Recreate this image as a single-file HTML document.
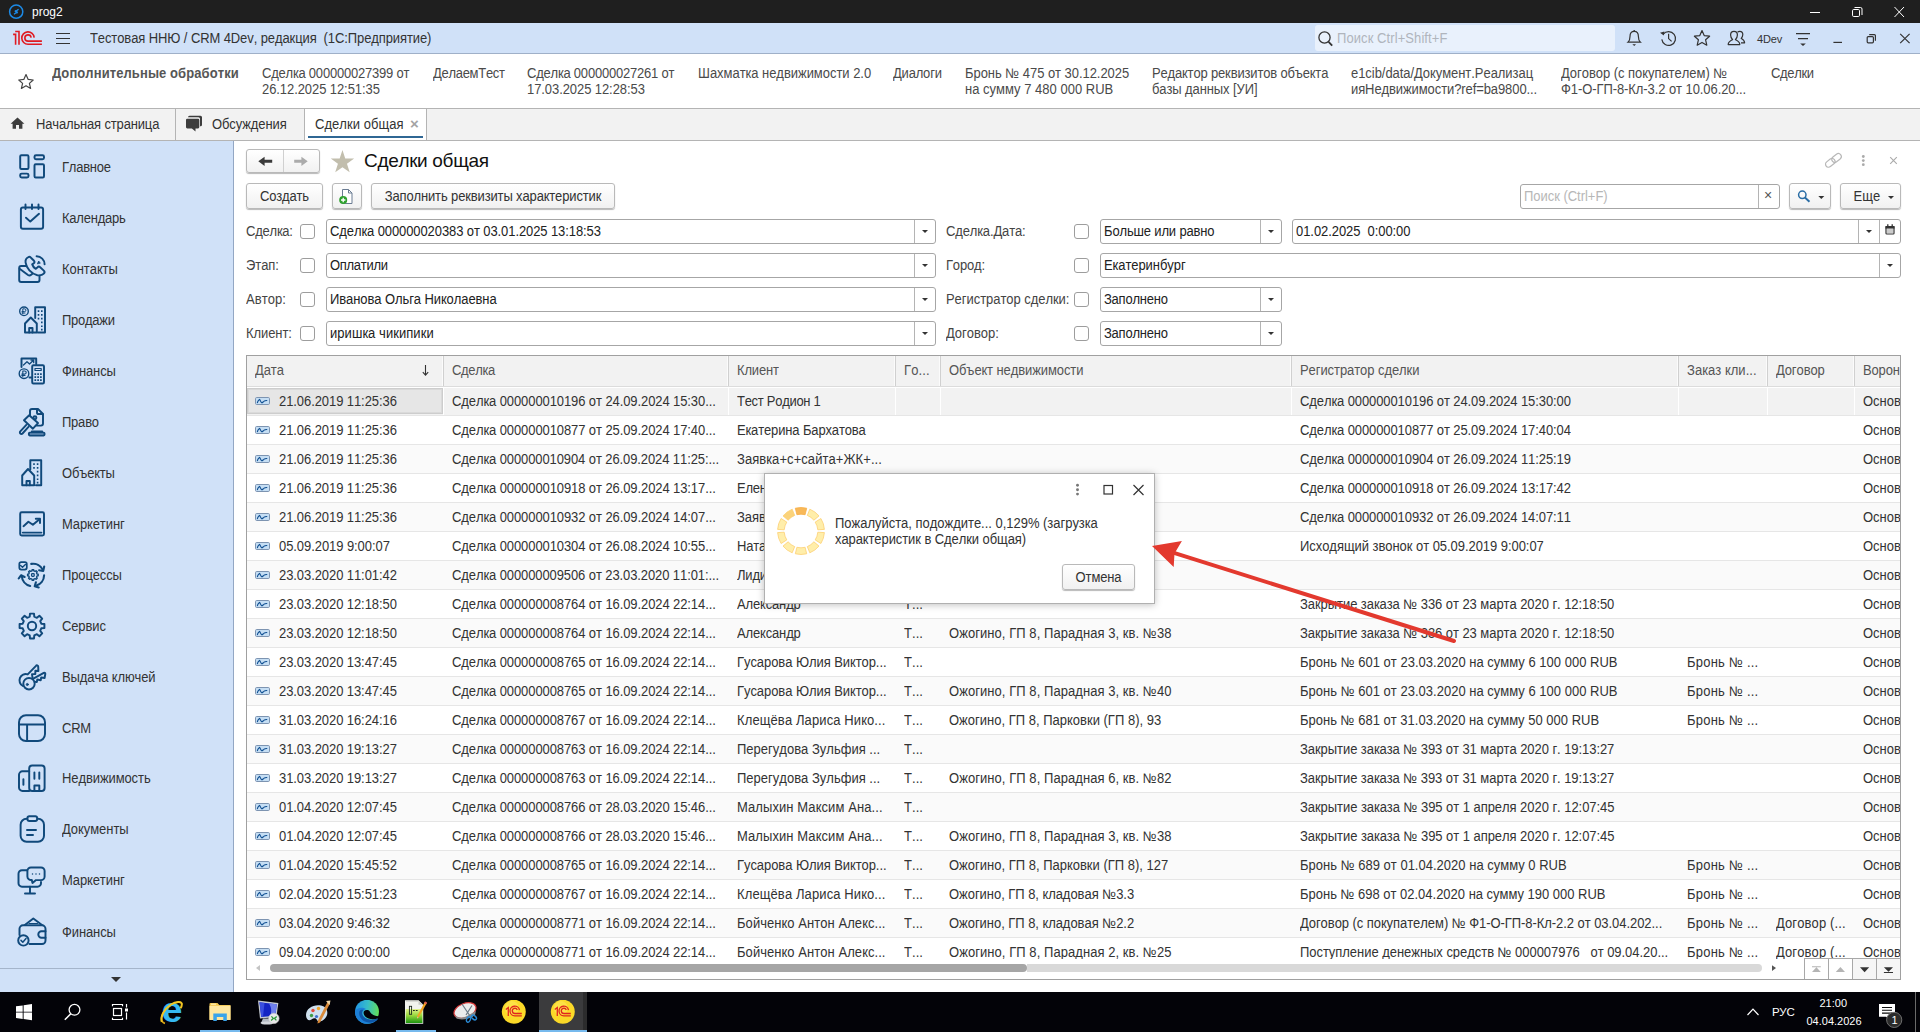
<!DOCTYPE html>
<html lang="ru"><head><meta charset="utf-8"><title>prog2</title>
<style>
*{box-sizing:border-box;margin:0;padding:0}
html,body{width:1920px;height:1032px;overflow:hidden;background:#fff}
body{font-family:"Liberation Sans",sans-serif;font-kerning:none;font-size:13px;color:#333;position:relative;line-height:16px}
.abs{position:absolute}
.s{display:inline-block;transform:scaleY(1.075);transform-origin:0 13px}
.t{position:absolute;white-space:nowrap}
#titlebar{left:0;top:0;width:1920px;height:23px;background:#1f1f1f}
#hdr{left:0;top:23px;width:1920px;height:31px;background:#d0e1f8;border-bottom:1px solid #9fb0c8}
#fav{left:0;top:54px;width:1920px;height:54px;background:#fff}
#tabs{left:0;top:108px;width:1920px;height:33px;background:#f2f2f2;border-top:1px solid #b4b4b4;border-bottom:1px solid #b4b4b4}
#side{left:0;top:141px;width:234px;height:851px;background:#d0e1f8;border-right:1px solid #93a7c4}
#taskbar{left:0;top:992px;width:1920px;height:40px;background:#030308}
.btn{position:absolute;border:1px solid #b9b9b9;border-radius:3px;background:linear-gradient(#fff,#f1f1f1);box-shadow:0 1px 1px rgba(0,0,0,.28);text-align:center;white-space:nowrap;color:#333}
.inp{position:absolute;height:25px;border:1px solid #a6a6a6;border-radius:3px;background:#fff;padding:4px 0 0 3px;white-space:nowrap;color:#222}
.inp i{position:absolute;top:0;bottom:0;width:1px;background:#b4b4b4}
.dd{position:absolute;width:0;height:0;border-left:3px solid transparent;border-right:3px solid transparent;border-top:3px solid #333;top:9.500px}
.cb{position:absolute;width:15px;height:15px;border:1px solid #9d9d9d;border-radius:3px;background:#fff}
.lbl{position:absolute;white-space:nowrap;color:#444}
.favt{position:absolute;top:66px;white-space:nowrap;color:#4a4a4a;font-size:13px;line-height:16px}
.sd{position:absolute;left:62px;white-space:nowrap;color:#333}
.hc{position:absolute;top:356px;height:30px;background:#f2f2f2;border-right:1px solid #d0d0d0;box-shadow:inset -1px 0 0 #fbfbfb;padding:7px 0 0 8px;color:#555;white-space:nowrap;overflow:hidden}
.row{position:absolute;left:247px;width:1653px;height:29px;border-bottom:1px solid #e6e6e6;overflow:hidden}
.c{position:absolute;top:7px;white-space:nowrap;color:#333}
</style></head><body>

<div class="abs" id="titlebar"></div>
<svg class="abs" style="left:8px;top:3px" width="18" height="18" viewBox="0 0 18 18" ><circle cx="8.2" cy="8.7" r="6.6" fill="none" stroke="#1c8ae6" stroke-width="1.5"/><path d="M6 11.2 L9 9 L6.8 7.6 M10.6 6.2 L7.6 8.4 L9.8 9.8" fill="none" stroke="#1c8ae6" stroke-width="1.4"/></svg>
<div class="t" style="left:32px;top:4px;color:#fff;font-size:12px;line-height:16px">prog2</div>
<svg class="abs" style="left:1800px;top:0px" width="120" height="23" viewBox="0 0 120 23" ><path d="M10 12.5 H20" stroke="#fff" stroke-width="1"/><path d="M54.5 7.5 h6 a1.5 1.5 0 0 1 1.5 1.5 v6" fill="none" stroke="#fff" stroke-width="1"/><rect x="52.5" y="9.5" width="7" height="7" rx="1.2" fill="none" stroke="#fff" stroke-width="1"/><path d="M94.5 7 L104 17 M104 7 L94.5 17" stroke="#fff" stroke-width="1"/></svg>
<div class="abs" id="hdr"></div>
<svg class="abs" style="left:12px;top:30px" width="32" height="17" viewBox="0 0 32 17" ><g fill="none" stroke="#e01b22" stroke-width="1.600"><path d="M1.100 4.400 H3.600 V14.800"/><path d="M3.200 1.500 H7 V14.800"/><path d="M22.180 7.560 A6.200 6.200 0 1 0 16 14.300 H29.900"/><path d="M19.120 7.560 A3.150 3.150 0 1 0 16 11.150 H29.900"/></g></svg>
<svg class="abs" style="left:54px;top:31px" width="18" height="15" viewBox="0 0 18 15" ><path d="M2 2.5 H16 M2 7.5 H16 M2 12.5 H16" stroke="#333" stroke-width="1.2"/></svg>
<div class="t" style="left:90px;top:31px;color:#333"><span class="s" style="letter-spacing:-0.100px;">Тестовая ННЮ / CRM 4Dev, редакция&nbsp; (1С:Предприятие)</span></div>
<div class="abs" style="left:1315px;top:25px;width:300px;height:26px;background:#e9f1fc;border-radius:3px"></div>
<div class="t" style="left:1337px;top:31px;color:#b0b5bd"><span class="s" style="letter-spacing:0.081px;">Поиск Ctrl+Shift+F</span></div>
<svg class="abs" style="left:1315px;top:24px" width="605" height="30" viewBox="0 0 605 30" ><g fill="none" stroke="#333" stroke-width="1.3"><circle cx="9.5" cy="13.5" r="5.6"/><path d="M13.6 17.8 L17.2 21.6" stroke-width="1.8"/><path d="M313 18.2 H325.4 C323.6 16.6 323.4 15 323.4 12.4 C323.4 9 321.8 7.4 319.2 7.4 C316.6 7.4 315 9 315 12.4 C315 15 314.8 16.6 313 18.2 Z" stroke-width="1.2"/><path d="M319.2 7.4 V6"/><path d="M317.400 20.300 H321 L319.200 21.900 Z" fill="#333" stroke="none"/><path d="M348.2 10.2 A6.9 6.9 0 1 1 346.8 15.4" stroke-width="1.2"/><path d="M345 8.800 L348.800 11.400 L349.400 7.400 Z" fill="#333" stroke="none"/><path d="M353.6 9.8 V14.6 L356.6 17.4" stroke-width="1.2"/><path d="M387 6.6 L389.2 11.6 L394.6 12.2 L390.6 15.8 L391.8 21.2 L387 18.4 L382.2 21.2 L383.4 15.8 L379.4 12.2 L384.8 11.6 Z" stroke-width="1.2" stroke-linejoin="round"/><path d="M413.2 20.6 C413.2 17.6 415.6 16.6 417.6 15.6 C416 14 415.6 12.4 415.6 11 C415.6 8.8 417.2 7.4 419 7.4 C420.8 7.4 422.4 8.8 422.4 11 C422.4 12.4 422 14 420.4 15.6 C422.4 16.6 424.8 17.6 424.8 20.6 Z" stroke-width="1.2" stroke-linejoin="round"/><path d="M422.6 8.2 C423.2 7.6 424 7.4 424.8 7.4 C426.4 7.400 427.800 8.600 427.800 10.600 C427.800 12 427.4 13.200 426.200 14.400 C428 15.400 429.600 16.200 429.600 18.800 H426" stroke-width="1.2" stroke-linejoin="round"/><path d="M481 9.7 H495 M483 14.700 H493" stroke-width="1.2"/></g><path d="M485.200 19.400 H490.800 L488 22 Z" fill="#333"/><g fill="none" stroke="#333" stroke-width="1.2"><path d="M518.400 18.400 H527"/><path d="M554.200 10.600 h5.200 a1 1 0 0 1 1 1 v5.200"/><rect x="552.2" y="12.600" width="6.200" height="6.200" rx="1"/><path d="M585.200 9.800 L594.600 19.200 M594.600 9.800 L585.200 19.200"/></g></svg>
<div class="t" style="left:1757px;top:31px;color:#333;font-size:11px;letter-spacing:-0.150px">4Dev</div>
<div class="abs" id="fav"></div>
<svg class="abs" style="left:16px;top:72px" width="20" height="18" viewBox="0 0 20 18" ><path d="M10 2.6 L12.2 7.4 L17.2 8 L13.4 11.400 L14.600 16.400 L10 13.800 L5.400 16.400 L6.600 11.400 L2.800 8 L7.800 7.400 Z" fill="none" stroke="#444" stroke-width="1.2" stroke-linejoin="round"/></svg>
<div class="favt" style="left:52px;top:66px;font-weight:bold;color:#565656"><span class="s" style="letter-spacing:0.090px">Дополнительные обработки</span></div>
<div class="favt" style="left:262px"><span class="s" style="letter-spacing:-0.210px;">Сделка 000000027399 от</span><br><span class="s" style="letter-spacing:-0.078px;">26.12.2025 12:51:35</span></div>
<div class="favt" style="left:433px"><span class="s" style="letter-spacing:-0.294px;">ДелаемТест</span></div>
<div class="favt" style="left:527px"><span class="s" style="letter-spacing:-0.210px;">Сделка 000000027261 от</span><br><span class="s" style="letter-spacing:-0.078px;">17.03.2025 12:28:53</span></div>
<div class="favt" style="left:698px"><span class="s" style="letter-spacing:-0.034px;">Шахматка недвижимости 2.0</span></div>
<div class="favt" style="left:893px"><span class="s" style="letter-spacing:-0.194px;">Диалоги</span></div>
<div class="favt" style="left:965px"><span class="s" style="letter-spacing:-0.044px;">Бронь № 475 от 30.12.2025</span><br><span class="s" style="letter-spacing:0.016px;">на сумму 7 480 000 RUB</span></div>
<div class="favt" style="left:1152px"><span class="s" style="letter-spacing:-0.162px;">Редактор реквизитов объекта</span><br><span class="s" style="letter-spacing:-0.099px;">базы данных [УИ]</span></div>
<div class="favt" style="left:1351px"><span class="s" style="letter-spacing:-0.045px;">e1cib/data/Документ.Реализац</span><br><span class="s" style="letter-spacing:-0.095px;">ияНедвижимости?ref=ba9800...</span></div>
<div class="favt" style="left:1561px"><span class="s" style="letter-spacing:-0.032px;">Договор (с покупателем) №</span><br><span class="s" style="letter-spacing:-0.080px;">Ф1-О-ГП-8-Кл-3.2 от 10.06.20...</span></div>
<div class="favt" style="left:1771px"><span class="s" style="letter-spacing:-0.326px;">Сделки</span></div>
<div class="abs" id="tabs"></div>
<div class="abs" style="left:175px;top:109px;width:1px;height:31px;background:#b4b4b4"></div>
<div class="abs" style="left:304px;top:109px;width:123px;height:31px;background:#fff;border-left:1px solid #b4b4b4;border-right:1px solid #b4b4b4"></div>
<div class="abs" style="left:308px;top:136px;width:115px;height:2px;background:#2f6794"></div>
<svg class="abs" style="left:8px;top:112px" width="200" height="24" viewBox="0 0 200 24" ><path d="M9.500 5.600 L2.600 11.800 H4.600 V16.800 H8 V13 H11 V16.800 H14.400 V11.800 H16.400 Z" fill="#3d3d3d"/><path d="M181.500 3.800 h11 a1.500 1.500 0 0 1 1.500 1.500 v7.500 a1.500 1.500 0 0 1 -1.500 1.500 h-0.500 v-7.500 a1.500 1.500 0 0 0 -1.500 -1.500 h-10.500 v0 a1.500 1.500 0 0 1 1.500 -1.500z" fill="#3d3d3d"/><path d="M179.300 6.800 h10.700 a1.300 1.300 0 0 1 1.300 1.300 v7 a1.300 1.300 0 0 1 -1.300 1.300 h-2.500 l0 3.200 l-3.600 -3.200 h-4.600 a1.300 1.300 0 0 1 -1.300 -1.300 v-7 a1.300 1.300 0 0 1 1.300 -1.300z" fill="#3d3d3d"/></svg>
<div class="t" style="left:36px;top:117px;color:#333"><span class="s" style="letter-spacing:-0.159px;">Начальная страница</span></div>
<div class="t" style="left:212px;top:117px;color:#333"><span class="s" style="letter-spacing:-0.092px;">Обсуждения</span></div>
<div class="t" style="left:315px;top:117px;color:#333"><span class="s" style="letter-spacing:0.042px;">Сделки общая</span></div>
<div class="t" style="left:410px;top:116px;color:#a4a4a4;font-size:15px;font-weight:bold">×</div>
<div class="abs" id="side"></div>
<svg class="abs" style="left:16px;top:151px" width="32" height="32" viewBox="0 0 32 32"><g fill="none" stroke="#10497b" stroke-width="1.950" stroke-linejoin="round" stroke-linecap="round"><rect x="4.200" y="4.200" width="8.300" height="13.700" rx="1.200"/><rect x="18.500" y="4.200" width="9.500" height="4" rx="1.500"/><rect x="4.200" y="22.600" width="8.300" height="3.800" rx="1.500"/><rect x="18.500" y="13.300" width="9.500" height="13.100" rx="1.200"/></g></svg>
<div class="sd" style="top:160px"><span class="s" style="letter-spacing:-0.235px;">Главное</span></div>
<svg class="abs" style="left:16px;top:202px" width="32" height="32" viewBox="0 0 32 32"><g fill="none" stroke="#10497b" stroke-width="1.950" stroke-linejoin="round" stroke-linecap="round"><rect x="4.900" y="5.500" width="22.200" height="21.300" rx="2"/><path d="M9.500 2.500 V7 M16 2.500 V7 M22.500 2.500 V7"/><path d="M10 15.700 L14.300 19.600 L23 11.800"/></g></svg>
<div class="sd" style="top:211px"><span class="s" style="letter-spacing:-0.215px;">Календарь</span></div>
<svg class="abs" style="left:16px;top:253px" width="32" height="32" viewBox="0 0 32 32"><g fill="none" stroke="#10497b" stroke-width="1.950" stroke-linejoin="round" stroke-linecap="round"><path d="M10.400 12.900 H5.200 a2 2 0 0 0 -2 2 V27 a2 2 0 0 0 2 2 H21.500 a2 2 0 0 0 2 -2 V22.600"/><path d="M3.600 15.800 L12 22 C13.200 22.800 14.200 22.600 15.200 21.800 L16.400 20.800"/><path d="M12.900 3.800 C14 3.400 14.600 4.400 15.200 5 L18 7.800 C18.800 8.800 18.600 9.600 17.800 10.200 L16.200 11.400 C16.800 13.400 18 14.800 19.800 15.800 L21.600 14.200 C22.400 13.400 23.400 13.400 24.200 14.200 L27.800 17.600 C28.800 18.600 28.600 19.800 27.800 20.600 C26 22.400 23.600 22.600 21.400 22.200 C15 20.800 10.400 15 9.600 9.600 C9.200 7.200 10.400 4.800 12.900 3.800 Z"/><path d="M20.600 3.200 A8.100 8.100 0 0 1 28.600 11.200"/><path d="M21.500 10.500 L22.700 8 L24.100 9.900 Z" fill="#10497b" stroke-width="0.800"/></g></svg>
<div class="sd" style="top:262px"><span class="s" style="letter-spacing:-0.054px;">Контакты</span></div>
<svg class="abs" style="left:16px;top:304px" width="32" height="32" viewBox="0 0 32 32"><g fill="none" stroke="#10497b" stroke-width="1.950" stroke-linejoin="round" stroke-linecap="round"><path d="M19.200 14 V3.200 H29 V28.400 H22"/><circle cx="8" cy="7.300" r="4.300" stroke-width="1.400"/><path d="M6.800 10 V4.800 H8.500 A1.400 1.400 0 0 1 8.500 7.600 H6 M6 9 H9" stroke-width="1"/><path d="M9 28.400 V19.500 L14.800 13.500 L20.800 19.500 V28.400 Z"/><path d="M13.200 28.400 V24 H16.500 V28.400"/><path d="M22.500 7 V7.100 M25.800 7 V7.100 M22.500 10.800 V10.900 M25.800 10.800 V10.900 M22.500 14.600 V14.700 M25.800 14.600 V14.700 M25.800 18.400 V18.500 M25.800 22.200 V22.300 M25.800 25.600 V25.700" stroke-width="1.600" stroke-linecap="square"/></g></svg>
<div class="sd" style="top:313px"><span class="s" style="letter-spacing:-0.263px;">Продажи</span></div>
<svg class="abs" style="left:16px;top:355px" width="32" height="32" viewBox="0 0 32 32"><g fill="none" stroke="#10497b" stroke-width="1.950" stroke-linejoin="round" stroke-linecap="round"><path d="M15.500 22.500 H13.500 M5.500 12 V3.500 H20.200 V9"/><path d="M7.500 10 L11 6.800 L13.500 9 L17.500 5.200 M15 5 H17.700 V7.700" stroke-width="1.300"/><circle cx="8" cy="18.700" r="4.800" stroke-width="1.400"/><path d="M6.800 21.600 V16 H8.700 A1.500 1.500 0 0 1 8.700 19 H5.800 M5.800 20.400 H9" stroke-width="1.100"/><rect x="16.200" y="10.300" width="11.800" height="18.200" rx="1.200"/><path d="M19 13.500 H25.200 V15.500 H19 Z" stroke-width="1.200"/><path d="M19.300 19 V19.100 M22.100 19 V19.100 M24.900 19 V19.100 M19.300 22 V22.100 M22.100 22 V22.100 M24.900 22 V22.100 M19.300 25 V25.100 M22.100 25 V25.100 M24.900 25 V25.100" stroke-width="1.700" stroke-linecap="square"/></g></svg>
<div class="sd" style="top:364px"><span class="s" style="letter-spacing:-0.121px;">Финансы</span></div>
<svg class="abs" style="left:16px;top:406px" width="32" height="32" viewBox="0 0 32 32"><g fill="none" stroke="#10497b" stroke-width="1.950" stroke-linejoin="round" stroke-linecap="round"><path d="M14 9.600 V5 a2 2 0 0 1 2 -2 H22 L27 8 V17.600 a2 2 0 0 1 -2 2 H20.800"/><path d="M21 3.400 V6.400 a1.600 1.600 0 0 0 1.600 1.600 H26.600"/><circle cx="18.900" cy="11.700" r="1.500"/><path d="M13.200 9.200 L22 17.100 L16.900 22.700 L8 14.200 Z" fill="#d0e1f8"/><path d="M10.300 18.900 L4.300 25.400 a1.500 1.500 0 0 0 2.200 2.100 L12.500 20.900"/><path d="M15.800 25.500 H26.200"/><rect x="12.900" y="26.600" width="15.600" height="2.800" rx="0.800" fill="#8fb0d6"/></g></svg>
<div class="sd" style="top:415px"><span class="s" style="letter-spacing:-0.225px;">Право</span></div>
<svg class="abs" style="left:16px;top:457px" width="32" height="32" viewBox="0 0 32 32"><g fill="none" stroke="#10497b" stroke-width="1.950" stroke-linejoin="round" stroke-linecap="round"><path d="M14.300 12.500 V3.200 H25.200 V28.200 H20"/><path d="M6.200 28.200 V18.500 L12 12 L18.200 18.500 V28.200 Z"/><path d="M10.500 28.200 V24 H13.800 V28.200"/><path d="M18 7 V7.100 M21.600 7 V7.100 M18 10.800 V10.900 M21.600 10.800 V10.900 M21.600 14.600 V14.700 M21.600 18.400 V18.500 M21.600 22.200 V22.300 M21.600 25.600 V25.700" stroke-width="1.600" stroke-linecap="square"/></g></svg>
<div class="sd" style="top:466px"><span class="s" style="letter-spacing:-0.166px;">Объекты</span></div>
<svg class="abs" style="left:16px;top:508px" width="32" height="32" viewBox="0 0 32 32"><g fill="none" stroke="#10497b" stroke-width="1.950" stroke-linejoin="round" stroke-linecap="round"><rect x="4.200" y="4.200" width="23.800" height="23.400" rx="1.500"/><path d="M6.800 24.600 H25.400"/><path d="M7.500 18.200 L12.400 13.700 L16.900 16.800 L23.500 11.200"/><path d="M19.800 10.800 H24 V15"/></g></svg>
<div class="sd" style="top:517px"><span class="s" style="letter-spacing:-0.073px;">Маркетинг</span></div>
<svg class="abs" style="left:16px;top:559px" width="32" height="32" viewBox="0 0 32 32"><g fill="none" stroke="#10497b" stroke-width="1.950" stroke-linejoin="round" stroke-linecap="round"><rect x="3.300" y="3.100" width="7.500" height="7.500" rx="2" stroke-width="1.700"/><path d="M4.600 6.500 L6.500 8.300 L9.400 5.500" stroke-width="1.400"/><path d="M16.0 11.9 L16.1 10.7 L17.7 10.7 L17.8 11.9 L19.1 12.4 L20.1 11.7 L21.2 12.8 L20.5 13.8 L21.0 15.1 L22.2 15.2 L22.2 16.8 L21.0 16.9 L20.5 18.2 L21.2 19.2 L20.1 20.3 L19.1 19.6 L17.8 20.1 L17.7 21.3 L16.1 21.3 L16.0 20.1 L14.7 19.6 L13.7 20.3 L12.6 19.2 L13.3 18.2 L12.8 16.9 L11.6 16.8 L11.6 15.2 L12.8 15.1 L13.3 13.8 L12.6 12.8 L13.7 11.7 L14.7 12.4 Z" stroke-width="1.400"/><rect x="15.600" y="14.700" width="2.600" height="2.600" rx="0.700" stroke-width="1.300"/><path d="M15.2 4.9 A11.2 11.2 0 0 1 26.9 10.9" stroke-width="2.100"/><path d="M28.200 7.600 L27.200 12 L23.100 11.300" stroke-width="2.100"/><path d="M28.1 16.3 A11.2 11.2 0 0 1 20.0 26.8" stroke-width="2.100"/><path d="M19.900 23.300 L18.700 27.300 L22.700 28.500" stroke-width="2.100"/><path d="M14.2 26.9 A11.2 11.2 0 0 1 5.7 16.8" stroke-width="2.100"/><path d="M2.700 19.500 L5 16.300 L8.600 18" stroke-width="2.100"/></g></svg>
<div class="sd" style="top:568px"><span class="s" style="letter-spacing:-0.140px;">Процессы</span></div>
<svg class="abs" style="left:16px;top:610px" width="32" height="32" viewBox="0 0 32 32"><g fill="none" stroke="#10497b" stroke-width="1.950" stroke-linejoin="round" stroke-linecap="round"><path d="M13.7 6.7 L14.0 3.6 L18.0 3.6 L18.3 6.7 L20.9 7.8 L23.4 5.8 L26.2 8.6 L24.2 11.1 L25.3 13.7 L28.4 14.0 L28.4 18.0 L25.3 18.3 L24.2 20.9 L26.2 23.4 L23.4 26.2 L20.9 24.2 L18.3 25.3 L18.0 28.4 L14.0 28.4 L13.7 25.3 L11.1 24.2 L8.6 26.2 L5.8 23.4 L7.8 20.9 L6.7 18.3 L3.6 18.0 L3.6 14.0 L6.7 13.7 L7.8 11.1 L5.8 8.6 L8.6 5.8 L11.1 7.8 Z"/><circle cx="16" cy="16" r="4.200"/></g></svg>
<div class="sd" style="top:619px"><span class="s" style="letter-spacing:-0.123px;">Сервис</span></div>
<svg class="abs" style="left:16px;top:661px" width="32" height="32" viewBox="0 0 32 32"><g fill="none" stroke="#10497b" stroke-width="1.950" stroke-linejoin="round" stroke-linecap="round"><path d="M6.900 25 A6.300 6.300 0 0 1 11.700 13.400 L20 4.900 a1.200 1.200 0 0 1 2.200 0.600 L22.400 10 L19.400 9.700 L19.300 13 L16 13.100 L16.500 16.600"/><circle cx="13" cy="22.700" r="5.700" fill="#d0e1f8"/><circle cx="11.300" cy="23.500" r="1.100" fill="#10497b" stroke-width="0.800"/><path d="M16.900 17.900 L27.800 11.900 a1 1 0 0 1 1.500 0.900 L28.600 17 L25.200 16.500 L24.700 19.200 L21.300 18.500 L20.800 21.100 L18.700 20.800"/></g></svg>
<div class="sd" style="top:670px"><span class="s" style="letter-spacing:-0.092px;">Выдача ключей</span></div>
<svg class="abs" style="left:16px;top:712px" width="32" height="32" viewBox="0 0 32 32"><g fill="none" stroke="#10497b" stroke-width="1.950" stroke-linejoin="round" stroke-linecap="round"><rect x="3" y="3.200" width="26" height="25.800" rx="7"/><path d="M3 12.400 H29 M11.100 12.400 V29"/></g></svg>
<div class="sd" style="top:721px"><span class="s" style="letter-spacing:-0.250px;">CRM</span></div>
<svg class="abs" style="left:16px;top:762px" width="32" height="32" viewBox="0 0 32 32"><g fill="none" stroke="#10497b" stroke-width="1.950" stroke-linejoin="round" stroke-linecap="round"><rect x="13.200" y="3.500" width="15.400" height="25.400" rx="3"/><path d="M13.200 9.300 H6.500 a3.500 3.500 0 0 0 -3.500 3.500 V25.400 a3.500 3.500 0 0 0 3.500 3.500 H13.200"/><path d="M18.400 10.500 V16.800 M23.300 10.500 V16.800 M7.400 17.300 V22.700"/><path d="M18.400 28.900 V23.500 H23.300 V28.900"/></g></svg>
<div class="sd" style="top:771px"><span class="s" style="letter-spacing:-0.097px;">Недвижимость</span></div>
<svg class="abs" style="left:16px;top:813px" width="32" height="32" viewBox="0 0 32 32"><g fill="none" stroke="#10497b" stroke-width="1.950" stroke-linejoin="round" stroke-linecap="round"><rect x="4.600" y="5.800" width="23.400" height="23" rx="6"/><rect x="11.500" y="3.200" width="9.600" height="4.800" rx="1.800" fill="#d3e3f9"/><path d="M11 16.900 H20 M11 21.900 H17"/></g></svg>
<div class="sd" style="top:822px"><span class="s" style="letter-spacing:-0.022px;">Документы</span></div>
<svg class="abs" style="left:16px;top:864px" width="32" height="32" viewBox="0 0 32 32"><g fill="none" stroke="#10497b" stroke-width="1.950" stroke-linejoin="round" stroke-linecap="round"><path d="M11 6.200 H6 a3.500 3.500 0 0 0 -3.500 3.500 V19.200 a3.500 3.500 0 0 0 3.500 3.500 H21.500 a3.500 3.500 0 0 0 3.500 -3.500 V18"/><path d="M14 22.700 V29 M9 29.400 H19"/><path d="M15 3.500 H25 a3.600 3.600 0 0 1 3.600 3.600 V12.500 a3.600 3.600 0 0 1 -3.600 3.600 H20 L16.500 19 L15.800 16 a3.600 3.600 0 0 1 -4.400 -3.500 V7.100 a3.600 3.600 0 0 1 3.600 -3.600z"/><path d="M16.500 10 V10.100 M20 10 V10.100 M23.500 10 V10.100" stroke-width="1.500"/></g></svg>
<div class="sd" style="top:873px"><span class="s" style="letter-spacing:-0.073px;">Маркетинг</span></div>
<svg class="abs" style="left:16px;top:916px" width="32" height="32" viewBox="0 0 32 32"><g fill="none" stroke="#10497b" stroke-width="1.950" stroke-linejoin="round" stroke-linecap="round"><path d="M13.500 28 H26 a3.500 3.500 0 0 0 3.500 -3.500 V12.800 a3.500 3.500 0 0 0 -3.500 -3.500 H7 a3.500 3.500 0 0 0 -3.500 3.500 V19"/><path d="M8.800 9 L17.300 2.500 L26 9"/><path d="M13 7.500 H21.500" stroke-width="1.200"/><path d="M29.500 15.300 H25.500 a3.200 3.200 0 0 0 0 6.400 H29.500"/><circle cx="7.400" cy="24.400" r="5.200"/><path d="M5 24.400 L6.800 26.200 L10 22.600" stroke-width="1.500"/></g></svg>
<div class="sd" style="top:925px"><span class="s" style="letter-spacing:-0.121px;">Финансы</span></div>
<div class="abs" style="left:0;top:968px;width:233px;height:1px;background:#a5b5cb"></div>
<div class="abs" style="left:111px;top:977px;width:0;height:0;border-left:5px solid transparent;border-right:5px solid transparent;border-top:5px solid #333"></div>
<div class="btn" style="left:246px;top:149px;width:74px;height:24px"></div>
<div class="abs" style="left:283px;top:150px;width:1px;height:22px;background:#d0d0d0"></div>
<svg class="abs" style="left:247px;top:149px" width="120" height="26" viewBox="0 0 120 26" ><path d="M11.300 12.300 L17.600 7.700 V10.800 H25.200 V13.800 H17.600 V16.900 Z" fill="#3a3a3a"/><path d="M60.700 12.300 L54.400 7.700 V10.800 H47.200 V13.800 H54.400 V16.900 Z" fill="#ababab"/><path d="M95.45 1.10 L98.24 9.56 L107.15 9.60 L99.97 14.87 L102.68 23.35 L95.45 18.15 L88.22 23.35 L90.93 14.87 L83.75 9.60 L92.66 9.56 Z" fill="#c2bead"/></svg>
<div class="t" style="left:364px;top:149px;font-size:19px;line-height:24px;color:#111;letter-spacing:-0.33px">Сделки общая</div>
<svg class="abs" style="left:1820px;top:150px" width="90" height="22" viewBox="0 0 90 22" ><g fill="none" stroke="#b8b8b8" stroke-width="1.200" transform="rotate(-38 13.400 10.400)"><rect x="4.200" y="7.400" width="10.500" height="6" rx="3"/><rect x="12.100" y="7.400" width="10.500" height="6" rx="3"/></g><circle cx="43.300" cy="6.500" r="1.400" fill="#aaa"/><circle cx="43.300" cy="10.600" r="1.400" fill="#aaa"/><circle cx="43.300" cy="14.700" r="1.400" fill="#aaa"/><path d="M70.200 7.200 L76.800 13.800 M76.800 7.200 L70.200 13.800" stroke="#aaa" stroke-width="1.100"/></svg>
<div class="btn" style="left:246px;top:183px;width:77px;height:26px;padding-top:5px"><span class="s" style="letter-spacing:-0.195px;">Создать</span></div>
<div class="btn" style="left:332px;top:183px;width:30px;height:26px"></div>
<svg class="abs" style="left:336.5px;top:188px" width="20" height="18" viewBox="0 0 20 18" ><path d="M5.500 1.500 H11.500 L15 5 V15.500 H5.500 Z" fill="#fff" stroke="#6b7c93" stroke-width="1"/><path d="M11.500 1.500 V5 H15" fill="none" stroke="#6b7c93" stroke-width="1"/><circle cx="6.200" cy="12" r="4" fill="#2fa12f"/><path d="M6.200 9.800 V14.200 M4 12 H8.400" stroke="#fff" stroke-width="1.300"/></svg>
<div class="btn" style="left:371px;top:183px;width:244px;height:26px;padding-top:5px"><span class="s" style="letter-spacing:-0.137px;">Заполнить реквизиты характеристик</span></div>
<div class="inp" style="left:1520px;top:184px;width:260px"><span style="color:#b7b7b7"><span class="s" style="letter-spacing:-0.033px;">Поиск (Ctrl+F)</span></span><i style="left:237px"></i><span style="position:absolute;left:243px;top:2px;color:#555;font-size:14px">×</span></div>
<div class="btn" style="left:1789px;top:183px;width:42px;height:26px"></div>
<svg class="abs" style="left:1789px;top:183px" width="42" height="26" viewBox="0 0 42 26" ><circle cx="13.300" cy="11.800" r="3.700" fill="none" stroke="#2a6da5" stroke-width="1.500"/><path d="M15.900 14.600 L20.500 18.700" stroke="#2a6da5" stroke-width="2"/><path d="M29.300 13 H35.300 L32.300 16 Z" fill="#333"/></svg>
<div class="btn" style="left:1840px;top:183px;width:61px;height:26px;padding:5px 7px 0 0"><span class="s" style="letter-spacing:0.089px;">Еще</span><span class="dd" style="left:47px;top:12px"></span></div>
<div class="lbl" style="left:246px;top:224px"><span class="s" style="letter-spacing:-0.222px;">Сделка:</span></div><div class="cb" style="left:300px;top:224px"></div>
<div class="inp" style="left:326px;top:219px;width:610px"><span class="s" style="letter-spacing:-0.094px;">Сделка 000000020383 от 03.01.2025 13:18:53</span><i style="left:587px"></i><span class="dd" style="left:595px"></span></div>
<div class="lbl" style="left:246px;top:258px"><span class="s" style="letter-spacing:-0.069px;">Этап:</span></div><div class="cb" style="left:300px;top:258px"></div>
<div class="inp" style="left:326px;top:253px;width:610px"><span class="s" style="letter-spacing:-0.291px;">Оплатили</span><i style="left:587px"></i><span class="dd" style="left:595px"></span></div>
<div class="lbl" style="left:246px;top:292px"><span class="s" style="letter-spacing:0.033px;">Автор:</span></div><div class="cb" style="left:300px;top:292px"></div>
<div class="inp" style="left:326px;top:287px;width:610px"><span class="s" style="letter-spacing:-0.084px;">Иванова Ольга Николаевна</span><i style="left:587px"></i><span class="dd" style="left:595px"></span></div>
<div class="lbl" style="left:246px;top:326px"><span class="s" style="letter-spacing:-0.089px;">Клиент:</span></div><div class="cb" style="left:300px;top:326px"></div>
<div class="inp" style="left:326px;top:321px;width:610px"><span class="s" style="letter-spacing:0.050px;">иришка чикипики</span><i style="left:587px"></i><span class="dd" style="left:595px"></span></div>
<div class="lbl" style="left:946px;top:224px"><span class="s" style="letter-spacing:-0.129px;">Сделка.Дата:</span></div><div class="cb" style="left:1074px;top:224px"></div>
<div class="lbl" style="left:946px;top:258px"><span class="s" style="letter-spacing:-0.187px;">Город:</span></div><div class="cb" style="left:1074px;top:258px"></div>
<div class="lbl" style="left:946px;top:292px"><span class="s" style="letter-spacing:-0.049px;">Регистратор сделки:</span></div><div class="cb" style="left:1074px;top:292px"></div>
<div class="lbl" style="left:946px;top:326px"><span class="s" style="letter-spacing:-0.031px;">Договор:</span></div><div class="cb" style="left:1074px;top:326px"></div>
<div class="inp" style="left:1100px;top:219px;width:182px"><span class="s" style="letter-spacing:-0.153px;">Больше или равно</span><i style="left:159px"></i><span class="dd" style="left:167px"></span></div>
<div class="inp" style="left:1292px;top:219px;width:609px"><span class="s" style="letter-spacing:-0.065px;">01.02.2025&nbsp; 0:00:00</span><i style="left:565px"></i><span class="dd" style="left:573px"></span><i style="left:586px"></i></div>
<svg class="abs" style="left:1882px;top:222px" width="16" height="16" viewBox="0 0 16 16" ><rect x="4" y="4.500" width="8" height="7.500" rx="0.800" fill="#fff" stroke="#333" stroke-width="1.200"/><rect x="3.500" y="4" width="9" height="2.600" fill="#333"/><path d="M5.800 2.200 V4.500 M10.200 2.200 V4.500" stroke="#333" stroke-width="1.300"/><path d="M5.500 8 h1 M7.500 8 h1 M9.500 8 h1 M5.500 10 h1 M7.500 10 h1 M9.500 10 h1" stroke="#333" stroke-width="1"/></svg>
<div class="inp" style="left:1100px;top:253px;width:801px"><span class="s" style="letter-spacing:-0.064px;">Екатеринбург</span><i style="left:778px"></i><span class="dd" style="left:786px"></span></div>
<div class="inp" style="left:1100px;top:287px;width:182px"><span class="s" style="letter-spacing:-0.231px;">Заполнено</span><i style="left:159px"></i><span class="dd" style="left:167px"></span></div>
<div class="inp" style="left:1100px;top:321px;width:182px"><span class="s" style="letter-spacing:-0.231px;">Заполнено</span><i style="left:159px"></i><span class="dd" style="left:167px"></span></div>
<div class="abs" style="left:246px;top:355px;width:1655px;height:625px;border:1px solid #a0a0a0;background:#fff"></div>
<div class="hc" style="left:247px;width:197px;padding-left:8px"><span class="s" style="letter-spacing:-0.091px;">Дата</span></div>
<div class="hc" style="left:444px;width:285px;padding-left:8px"><span class="s" style="letter-spacing:-0.320px;">Сделка</span></div>
<div class="hc" style="left:729px;width:167px;padding-left:8px"><span class="s" style="letter-spacing:-0.166px;">Клиент</span></div>
<div class="hc" style="left:896px;width:45px;padding-left:8px"><span class="s" style="letter-spacing:0.153px;">Го...</span></div>
<div class="hc" style="left:941px;width:351px;padding-left:8px"><span class="s" style="letter-spacing:-0.097px;">Объект недвижимости</span></div>
<div class="hc" style="left:1292px;width:387px;padding-left:8px"><span class="s" style="letter-spacing:-0.072px;">Регистратор сделки</span></div>
<div class="hc" style="left:1679px;width:89px;padding-left:8px"><span class="s" style="letter-spacing:0.059px;">Заказ кли...</span></div>
<div class="hc" style="left:1768px;width:87px;padding-left:8px"><span class="s" style="letter-spacing:-0.088px;">Договор</span></div>
<div class="hc" style="left:1855px;width:45px;border-right:none;box-shadow:none;padding-left:8px"><span class="s" style="letter-spacing:-0.145px;">Ворон</span></div>
<div class="abs" style="left:247px;top:386px;width:1653px;height:1px;background:#dcdcdc"></div>
<svg class="abs" style="left:420px;top:363px" width="12" height="14" viewBox="0 0 12 14"><path d="M5.500 2 V12 M2.800 9.200 L5.500 12.200 L8.200 9.200" fill="none" stroke="#333" stroke-width="1.100"/></svg>
<div class="row" style="top:387px;background:#fff">
<div class="abs" style="left:0;top:1px;width:1653px;height:27px;background:#f2f2f2"></div>
<div class="abs" style="left:196px;top:1px;width:1px;height:27px;background:#fff"></div>
<div class="abs" style="left:481px;top:1px;width:1px;height:27px;background:#fff"></div>
<div class="abs" style="left:648px;top:1px;width:1px;height:27px;background:#fff"></div>
<div class="abs" style="left:693px;top:1px;width:1px;height:27px;background:#fff"></div>
<div class="abs" style="left:1044px;top:1px;width:1px;height:27px;background:#fff"></div>
<div class="abs" style="left:1431px;top:1px;width:1px;height:27px;background:#fff"></div>
<div class="abs" style="left:1520px;top:1px;width:1px;height:27px;background:#fff"></div>
<div class="abs" style="left:1607px;top:1px;width:1px;height:27px;background:#fff"></div>
<div class="abs" style="left:0;top:1px;width:196px;height:26px;border:1px solid #cdcdcd;box-shadow:inset 0 0 0 1px #dadada;background:#e6e6e6"></div>
<svg class="abs" style="left:8px;top:9px" width="16" height="10" viewBox="0 0 16 10"><rect x="0.500" y="1.500" width="14" height="7" rx="1.200" fill="#c5def4" stroke="#7d94b1" stroke-width="1"/><path d="M2.400 6.700 C2.600 5.400 3.600 4.200 4.500 3.400 C5.300 4 5.600 6 6.600 6.700 C7.500 7.100 8 5.900 8.700 5.400 C9.500 4.800 10.300 4.500 11.800 4.500" fill="none" stroke="#0f4f92" stroke-width="1.150" stroke-linecap="round"/></svg>
<div class="c" style="left:32px"><span class="s" style="letter-spacing:-0.078px;">21.06.2019 11:25:36</span></div>
<div class="c" style="left:205px"><span class="s" style="letter-spacing:-0.091px;">Сделка 000000010196 от 24.09.2024 15:30...</span></div>
<div class="c" style="left:490px"><span class="s" style="letter-spacing:-0.287px;">Тест Родион 1</span></div>
<div class="c" style="left:1053px"><span class="s" style="letter-spacing:-0.094px;">Сделка 000000010196 от 24.09.2024 15:30:00</span></div>
<div class="c" style="left:1616px"><span class="s" style="letter-spacing:-0.023px;">Основ</span></div>
</div>
<div class="row" style="top:416px;background:#fff">
<svg class="abs" style="left:8px;top:9px" width="16" height="10" viewBox="0 0 16 10"><rect x="0.500" y="1.500" width="14" height="7" rx="1.200" fill="#c5def4" stroke="#7d94b1" stroke-width="1"/><path d="M2.400 6.700 C2.600 5.400 3.600 4.200 4.500 3.400 C5.300 4 5.600 6 6.600 6.700 C7.500 7.100 8 5.900 8.700 5.400 C9.500 4.800 10.300 4.500 11.800 4.500" fill="none" stroke="#0f4f92" stroke-width="1.150" stroke-linecap="round"/></svg>
<div class="c" style="left:32px"><span class="s" style="letter-spacing:-0.078px;">21.06.2019 11:25:36</span></div>
<div class="c" style="left:205px"><span class="s" style="letter-spacing:-0.091px;">Сделка 000000010877 от 25.09.2024 17:40...</span></div>
<div class="c" style="left:490px"><span class="s" style="letter-spacing:-0.138px;">Екатерина Бархатова</span></div>
<div class="c" style="left:1053px"><span class="s" style="letter-spacing:-0.094px;">Сделка 000000010877 от 25.09.2024 17:40:04</span></div>
<div class="c" style="left:1616px"><span class="s" style="letter-spacing:-0.023px;">Основ</span></div>
</div>
<div class="row" style="top:445px;background:#fafafa">
<svg class="abs" style="left:8px;top:9px" width="16" height="10" viewBox="0 0 16 10"><rect x="0.500" y="1.500" width="14" height="7" rx="1.200" fill="#c5def4" stroke="#7d94b1" stroke-width="1"/><path d="M2.400 6.700 C2.600 5.400 3.600 4.200 4.500 3.400 C5.300 4 5.600 6 6.600 6.700 C7.500 7.100 8 5.900 8.700 5.400 C9.500 4.800 10.300 4.500 11.800 4.500" fill="none" stroke="#0f4f92" stroke-width="1.150" stroke-linecap="round"/></svg>
<div class="c" style="left:32px"><span class="s" style="letter-spacing:-0.078px;">21.06.2019 11:25:36</span></div>
<div class="c" style="left:205px"><span class="s" style="letter-spacing:-0.097px;">Сделка 000000010904 от 26.09.2024 11:25:...</span></div>
<div class="c" style="left:490px"><span class="s" style="letter-spacing:0.074px;">Заявка+с+сайта+ЖК+...</span></div>
<div class="c" style="left:1053px"><span class="s" style="letter-spacing:-0.094px;">Сделка 000000010904 от 26.09.2024 11:25:19</span></div>
<div class="c" style="left:1616px"><span class="s" style="letter-spacing:-0.023px;">Основ</span></div>
</div>
<div class="row" style="top:474px;background:#fff">
<svg class="abs" style="left:8px;top:9px" width="16" height="10" viewBox="0 0 16 10"><rect x="0.500" y="1.500" width="14" height="7" rx="1.200" fill="#c5def4" stroke="#7d94b1" stroke-width="1"/><path d="M2.400 6.700 C2.600 5.400 3.600 4.200 4.500 3.400 C5.300 4 5.600 6 6.600 6.700 C7.500 7.100 8 5.900 8.700 5.400 C9.500 4.800 10.300 4.500 11.800 4.500" fill="none" stroke="#0f4f92" stroke-width="1.150" stroke-linecap="round"/></svg>
<div class="c" style="left:32px"><span class="s" style="letter-spacing:-0.078px;">21.06.2019 11:25:36</span></div>
<div class="c" style="left:205px"><span class="s" style="letter-spacing:-0.091px;">Сделка 000000010918 от 26.09.2024 13:17...</span></div>
<div class="c" style="left:490px"><span class="s" style="letter-spacing:-0.216px;">Елена</span></div>
<div class="c" style="left:1053px"><span class="s" style="letter-spacing:-0.094px;">Сделка 000000010918 от 26.09.2024 13:17:42</span></div>
<div class="c" style="left:1616px"><span class="s" style="letter-spacing:-0.023px;">Основ</span></div>
</div>
<div class="row" style="top:503px;background:#fafafa">
<svg class="abs" style="left:8px;top:9px" width="16" height="10" viewBox="0 0 16 10"><rect x="0.500" y="1.500" width="14" height="7" rx="1.200" fill="#c5def4" stroke="#7d94b1" stroke-width="1"/><path d="M2.400 6.700 C2.600 5.400 3.600 4.200 4.500 3.400 C5.300 4 5.600 6 6.600 6.700 C7.500 7.100 8 5.900 8.700 5.400 C9.500 4.800 10.300 4.500 11.800 4.500" fill="none" stroke="#0f4f92" stroke-width="1.150" stroke-linecap="round"/></svg>
<div class="c" style="left:32px"><span class="s" style="letter-spacing:-0.078px;">21.06.2019 11:25:36</span></div>
<div class="c" style="left:205px"><span class="s" style="letter-spacing:-0.091px;">Сделка 000000010932 от 26.09.2024 14:07...</span></div>
<div class="c" style="left:490px"><span class="s" style="letter-spacing:-0.026px;">Заявка</span></div>
<div class="c" style="left:1053px"><span class="s" style="letter-spacing:-0.094px;">Сделка 000000010932 от 26.09.2024 14:07:11</span></div>
<div class="c" style="left:1616px"><span class="s" style="letter-spacing:-0.023px;">Основ</span></div>
</div>
<div class="row" style="top:532px;background:#fff">
<svg class="abs" style="left:8px;top:9px" width="16" height="10" viewBox="0 0 16 10"><rect x="0.500" y="1.500" width="14" height="7" rx="1.200" fill="#c5def4" stroke="#7d94b1" stroke-width="1"/><path d="M2.400 6.700 C2.600 5.400 3.600 4.200 4.500 3.400 C5.300 4 5.600 6 6.600 6.700 C7.500 7.100 8 5.900 8.700 5.400 C9.500 4.800 10.300 4.500 11.800 4.500" fill="none" stroke="#0f4f92" stroke-width="1.150" stroke-linecap="round"/></svg>
<div class="c" style="left:32px"><span class="s" style="letter-spacing:-0.069px;">05.09.2019 9:00:07</span></div>
<div class="c" style="left:205px"><span class="s" style="letter-spacing:-0.091px;">Сделка 000000010304 от 26.08.2024 10:55...</span></div>
<div class="c" style="left:490px"><span class="s" style="letter-spacing:-0.207px;">Наталья</span></div>
<div class="c" style="left:1053px"><span class="s" style="letter-spacing:-0.050px;">Исходящий звонок от 05.09.2019 9:00:07</span></div>
<div class="c" style="left:1616px"><span class="s" style="letter-spacing:-0.023px;">Основ</span></div>
</div>
<div class="row" style="top:561px;background:#fafafa">
<svg class="abs" style="left:8px;top:9px" width="16" height="10" viewBox="0 0 16 10"><rect x="0.500" y="1.500" width="14" height="7" rx="1.200" fill="#c5def4" stroke="#7d94b1" stroke-width="1"/><path d="M2.400 6.700 C2.600 5.400 3.600 4.200 4.500 3.400 C5.300 4 5.600 6 6.600 6.700 C7.500 7.100 8 5.900 8.700 5.400 C9.500 4.800 10.300 4.500 11.800 4.500" fill="none" stroke="#0f4f92" stroke-width="1.150" stroke-linecap="round"/></svg>
<div class="c" style="left:32px"><span class="s" style="letter-spacing:-0.078px;">23.03.2020 11:01:42</span></div>
<div class="c" style="left:205px"><span class="s" style="letter-spacing:-0.097px;">Сделка 000000009506 от 23.03.2020 11:01:...</span></div>
<div class="c" style="left:490px"><span class="s" style="letter-spacing:-0.173px;">Лидия</span></div>
<div class="c" style="left:1616px"><span class="s" style="letter-spacing:-0.023px;">Основ</span></div>
</div>
<div class="row" style="top:590px;background:#fff">
<svg class="abs" style="left:8px;top:9px" width="16" height="10" viewBox="0 0 16 10"><rect x="0.500" y="1.500" width="14" height="7" rx="1.200" fill="#c5def4" stroke="#7d94b1" stroke-width="1"/><path d="M2.400 6.700 C2.600 5.400 3.600 4.200 4.500 3.400 C5.300 4 5.600 6 6.600 6.700 C7.500 7.100 8 5.900 8.700 5.400 C9.500 4.800 10.300 4.500 11.800 4.500" fill="none" stroke="#0f4f92" stroke-width="1.150" stroke-linecap="round"/></svg>
<div class="c" style="left:32px"><span class="s" style="letter-spacing:-0.078px;">23.03.2020 12:18:50</span></div>
<div class="c" style="left:205px"><span class="s" style="letter-spacing:-0.091px;">Сделка 000000008764 от 16.09.2024 22:14...</span></div>
<div class="c" style="left:490px"><span class="s" style="letter-spacing:-0.135px;">Александр</span></div>
<div class="c" style="left:657px"><span class="s" style="letter-spacing:0.056px;">Т...</span></div>
<div class="c" style="left:1053px"><span class="s" style="letter-spacing:-0.061px;">Закрытие заказа № 336 от 23 марта 2020 г. 12:18:50</span></div>
<div class="c" style="left:1616px"><span class="s" style="letter-spacing:-0.023px;">Основ</span></div>
</div>
<div class="row" style="top:619px;background:#fafafa">
<svg class="abs" style="left:8px;top:9px" width="16" height="10" viewBox="0 0 16 10"><rect x="0.500" y="1.500" width="14" height="7" rx="1.200" fill="#c5def4" stroke="#7d94b1" stroke-width="1"/><path d="M2.400 6.700 C2.600 5.400 3.600 4.200 4.500 3.400 C5.300 4 5.600 6 6.600 6.700 C7.500 7.100 8 5.900 8.700 5.400 C9.500 4.800 10.300 4.500 11.800 4.500" fill="none" stroke="#0f4f92" stroke-width="1.150" stroke-linecap="round"/></svg>
<div class="c" style="left:32px"><span class="s" style="letter-spacing:-0.078px;">23.03.2020 12:18:50</span></div>
<div class="c" style="left:205px"><span class="s" style="letter-spacing:-0.091px;">Сделка 000000008764 от 16.09.2024 22:14...</span></div>
<div class="c" style="left:490px"><span class="s" style="letter-spacing:-0.135px;">Александр</span></div>
<div class="c" style="left:657px"><span class="s" style="letter-spacing:0.056px;">Т...</span></div>
<div class="c" style="left:702px"><span class="s" style="letter-spacing:0.058px;">Ожогино, ГП 8, Парадная 3, кв. №38</span></div>
<div class="c" style="left:1053px"><span class="s" style="letter-spacing:-0.061px;">Закрытие заказа № 336 от 23 марта 2020 г. 12:18:50</span></div>
<div class="c" style="left:1616px"><span class="s" style="letter-spacing:-0.023px;">Основ</span></div>
</div>
<div class="row" style="top:648px;background:#fff">
<svg class="abs" style="left:8px;top:9px" width="16" height="10" viewBox="0 0 16 10"><rect x="0.500" y="1.500" width="14" height="7" rx="1.200" fill="#c5def4" stroke="#7d94b1" stroke-width="1"/><path d="M2.400 6.700 C2.600 5.400 3.600 4.200 4.500 3.400 C5.300 4 5.600 6 6.600 6.700 C7.500 7.100 8 5.900 8.700 5.400 C9.500 4.800 10.300 4.500 11.800 4.500" fill="none" stroke="#0f4f92" stroke-width="1.150" stroke-linecap="round"/></svg>
<div class="c" style="left:32px"><span class="s" style="letter-spacing:-0.078px;">23.03.2020 13:47:45</span></div>
<div class="c" style="left:205px"><span class="s" style="letter-spacing:-0.091px;">Сделка 000000008765 от 16.09.2024 22:14...</span></div>
<div class="c" style="left:490px"><span class="s" style="letter-spacing:-0.064px;">Гусарова Юлия Виктор...</span></div>
<div class="c" style="left:657px"><span class="s" style="letter-spacing:0.056px;">Т...</span></div>
<div class="c" style="left:1053px"><span class="s" style="letter-spacing:0.015px;">Бронь № 601 от 23.03.2020 на сумму 6 100 000 RUB</span></div>
<div class="c" style="left:1440px"><span class="s" style="letter-spacing:0.223px;">Бронь № ...</span></div>
<div class="c" style="left:1616px"><span class="s" style="letter-spacing:-0.023px;">Основ</span></div>
</div>
<div class="row" style="top:677px;background:#fafafa">
<svg class="abs" style="left:8px;top:9px" width="16" height="10" viewBox="0 0 16 10"><rect x="0.500" y="1.500" width="14" height="7" rx="1.200" fill="#c5def4" stroke="#7d94b1" stroke-width="1"/><path d="M2.400 6.700 C2.600 5.400 3.600 4.200 4.500 3.400 C5.300 4 5.600 6 6.600 6.700 C7.500 7.100 8 5.900 8.700 5.400 C9.500 4.800 10.300 4.500 11.800 4.500" fill="none" stroke="#0f4f92" stroke-width="1.150" stroke-linecap="round"/></svg>
<div class="c" style="left:32px"><span class="s" style="letter-spacing:-0.078px;">23.03.2020 13:47:45</span></div>
<div class="c" style="left:205px"><span class="s" style="letter-spacing:-0.091px;">Сделка 000000008765 от 16.09.2024 22:14...</span></div>
<div class="c" style="left:490px"><span class="s" style="letter-spacing:-0.064px;">Гусарова Юлия Виктор...</span></div>
<div class="c" style="left:657px"><span class="s" style="letter-spacing:0.056px;">Т...</span></div>
<div class="c" style="left:702px"><span class="s" style="letter-spacing:0.058px;">Ожогино, ГП 8, Парадная 3, кв. №40</span></div>
<div class="c" style="left:1053px"><span class="s" style="letter-spacing:0.015px;">Бронь № 601 от 23.03.2020 на сумму 6 100 000 RUB</span></div>
<div class="c" style="left:1440px"><span class="s" style="letter-spacing:0.223px;">Бронь № ...</span></div>
<div class="c" style="left:1616px"><span class="s" style="letter-spacing:-0.023px;">Основ</span></div>
</div>
<div class="row" style="top:706px;background:#fff">
<svg class="abs" style="left:8px;top:9px" width="16" height="10" viewBox="0 0 16 10"><rect x="0.500" y="1.500" width="14" height="7" rx="1.200" fill="#c5def4" stroke="#7d94b1" stroke-width="1"/><path d="M2.400 6.700 C2.600 5.400 3.600 4.200 4.500 3.400 C5.300 4 5.600 6 6.600 6.700 C7.500 7.100 8 5.900 8.700 5.400 C9.500 4.800 10.300 4.500 11.800 4.500" fill="none" stroke="#0f4f92" stroke-width="1.150" stroke-linecap="round"/></svg>
<div class="c" style="left:32px"><span class="s" style="letter-spacing:-0.078px;">31.03.2020 16:24:16</span></div>
<div class="c" style="left:205px"><span class="s" style="letter-spacing:-0.091px;">Сделка 000000008767 от 16.09.2024 22:14...</span></div>
<div class="c" style="left:490px"><span class="s" style="letter-spacing:0.111px;">Клещёва Лариса Нико...</span></div>
<div class="c" style="left:657px"><span class="s" style="letter-spacing:0.056px;">Т...</span></div>
<div class="c" style="left:702px"><span class="s" style="letter-spacing:0.009px;">Ожогино, ГП 8, Парковки (ГП 8), 93</span></div>
<div class="c" style="left:1053px"><span class="s" style="letter-spacing:0.009px;">Бронь № 681 от 31.03.2020 на сумму 50 000 RUB</span></div>
<div class="c" style="left:1440px"><span class="s" style="letter-spacing:0.223px;">Бронь № ...</span></div>
<div class="c" style="left:1616px"><span class="s" style="letter-spacing:-0.023px;">Основ</span></div>
</div>
<div class="row" style="top:735px;background:#fafafa">
<svg class="abs" style="left:8px;top:9px" width="16" height="10" viewBox="0 0 16 10"><rect x="0.500" y="1.500" width="14" height="7" rx="1.200" fill="#c5def4" stroke="#7d94b1" stroke-width="1"/><path d="M2.400 6.700 C2.600 5.400 3.600 4.200 4.500 3.400 C5.300 4 5.600 6 6.600 6.700 C7.500 7.100 8 5.900 8.700 5.400 C9.500 4.800 10.300 4.500 11.800 4.500" fill="none" stroke="#0f4f92" stroke-width="1.150" stroke-linecap="round"/></svg>
<div class="c" style="left:32px"><span class="s" style="letter-spacing:-0.078px;">31.03.2020 19:13:27</span></div>
<div class="c" style="left:205px"><span class="s" style="letter-spacing:-0.091px;">Сделка 000000008763 от 16.09.2024 22:14...</span></div>
<div class="c" style="left:490px"><span class="s" style="letter-spacing:0.009px;">Перегудова Зульфия ...</span></div>
<div class="c" style="left:657px"><span class="s" style="letter-spacing:0.056px;">Т...</span></div>
<div class="c" style="left:1053px"><span class="s" style="letter-spacing:-0.061px;">Закрытие заказа № 393 от 31 марта 2020 г. 19:13:27</span></div>
<div class="c" style="left:1616px"><span class="s" style="letter-spacing:-0.023px;">Основ</span></div>
</div>
<div class="row" style="top:764px;background:#fff">
<svg class="abs" style="left:8px;top:9px" width="16" height="10" viewBox="0 0 16 10"><rect x="0.500" y="1.500" width="14" height="7" rx="1.200" fill="#c5def4" stroke="#7d94b1" stroke-width="1"/><path d="M2.400 6.700 C2.600 5.400 3.600 4.200 4.500 3.400 C5.300 4 5.600 6 6.600 6.700 C7.500 7.100 8 5.900 8.700 5.400 C9.500 4.800 10.300 4.500 11.800 4.500" fill="none" stroke="#0f4f92" stroke-width="1.150" stroke-linecap="round"/></svg>
<div class="c" style="left:32px"><span class="s" style="letter-spacing:-0.078px;">31.03.2020 19:13:27</span></div>
<div class="c" style="left:205px"><span class="s" style="letter-spacing:-0.091px;">Сделка 000000008763 от 16.09.2024 22:14...</span></div>
<div class="c" style="left:490px"><span class="s" style="letter-spacing:0.009px;">Перегудова Зульфия ...</span></div>
<div class="c" style="left:657px"><span class="s" style="letter-spacing:0.056px;">Т...</span></div>
<div class="c" style="left:702px"><span class="s" style="letter-spacing:0.058px;">Ожогино, ГП 8, Парадная 6, кв. №82</span></div>
<div class="c" style="left:1053px"><span class="s" style="letter-spacing:-0.061px;">Закрытие заказа № 393 от 31 марта 2020 г. 19:13:27</span></div>
<div class="c" style="left:1616px"><span class="s" style="letter-spacing:-0.023px;">Основ</span></div>
</div>
<div class="row" style="top:793px;background:#fafafa">
<svg class="abs" style="left:8px;top:9px" width="16" height="10" viewBox="0 0 16 10"><rect x="0.500" y="1.500" width="14" height="7" rx="1.200" fill="#c5def4" stroke="#7d94b1" stroke-width="1"/><path d="M2.400 6.700 C2.600 5.400 3.600 4.200 4.500 3.400 C5.300 4 5.600 6 6.600 6.700 C7.500 7.100 8 5.900 8.700 5.400 C9.500 4.800 10.300 4.500 11.800 4.500" fill="none" stroke="#0f4f92" stroke-width="1.150" stroke-linecap="round"/></svg>
<div class="c" style="left:32px"><span class="s" style="letter-spacing:-0.078px;">01.04.2020 12:07:45</span></div>
<div class="c" style="left:205px"><span class="s" style="letter-spacing:-0.091px;">Сделка 000000008766 от 28.03.2020 15:46...</span></div>
<div class="c" style="left:490px"><span class="s" style="letter-spacing:0.104px;">Малыхин Максим Ана...</span></div>
<div class="c" style="left:657px"><span class="s" style="letter-spacing:0.056px;">Т...</span></div>
<div class="c" style="left:1053px"><span class="s" style="letter-spacing:-0.049px;">Закрытие заказа № 395 от 1 апреля 2020 г. 12:07:45</span></div>
<div class="c" style="left:1616px"><span class="s" style="letter-spacing:-0.023px;">Основ</span></div>
</div>
<div class="row" style="top:822px;background:#fff">
<svg class="abs" style="left:8px;top:9px" width="16" height="10" viewBox="0 0 16 10"><rect x="0.500" y="1.500" width="14" height="7" rx="1.200" fill="#c5def4" stroke="#7d94b1" stroke-width="1"/><path d="M2.400 6.700 C2.600 5.400 3.600 4.200 4.500 3.400 C5.300 4 5.600 6 6.600 6.700 C7.500 7.100 8 5.900 8.700 5.400 C9.500 4.800 10.300 4.500 11.800 4.500" fill="none" stroke="#0f4f92" stroke-width="1.150" stroke-linecap="round"/></svg>
<div class="c" style="left:32px"><span class="s" style="letter-spacing:-0.078px;">01.04.2020 12:07:45</span></div>
<div class="c" style="left:205px"><span class="s" style="letter-spacing:-0.091px;">Сделка 000000008766 от 28.03.2020 15:46...</span></div>
<div class="c" style="left:490px"><span class="s" style="letter-spacing:0.104px;">Малыхин Максим Ана...</span></div>
<div class="c" style="left:657px"><span class="s" style="letter-spacing:0.056px;">Т...</span></div>
<div class="c" style="left:702px"><span class="s" style="letter-spacing:0.058px;">Ожогино, ГП 8, Парадная 3, кв. №38</span></div>
<div class="c" style="left:1053px"><span class="s" style="letter-spacing:-0.049px;">Закрытие заказа № 395 от 1 апреля 2020 г. 12:07:45</span></div>
<div class="c" style="left:1616px"><span class="s" style="letter-spacing:-0.023px;">Основ</span></div>
</div>
<div class="row" style="top:851px;background:#fafafa">
<svg class="abs" style="left:8px;top:9px" width="16" height="10" viewBox="0 0 16 10"><rect x="0.500" y="1.500" width="14" height="7" rx="1.200" fill="#c5def4" stroke="#7d94b1" stroke-width="1"/><path d="M2.400 6.700 C2.600 5.400 3.600 4.200 4.500 3.400 C5.300 4 5.600 6 6.600 6.700 C7.500 7.100 8 5.900 8.700 5.400 C9.500 4.800 10.300 4.500 11.800 4.500" fill="none" stroke="#0f4f92" stroke-width="1.150" stroke-linecap="round"/></svg>
<div class="c" style="left:32px"><span class="s" style="letter-spacing:-0.078px;">01.04.2020 15:45:52</span></div>
<div class="c" style="left:205px"><span class="s" style="letter-spacing:-0.091px;">Сделка 000000008765 от 16.09.2024 22:14...</span></div>
<div class="c" style="left:490px"><span class="s" style="letter-spacing:-0.064px;">Гусарова Юлия Виктор...</span></div>
<div class="c" style="left:657px"><span class="s" style="letter-spacing:0.056px;">Т...</span></div>
<div class="c" style="left:702px"><span class="s" style="letter-spacing:0.003px;">Ожогино, ГП 8, Парковки (ГП 8), 127</span></div>
<div class="c" style="left:1053px"><span class="s" style="letter-spacing:0.012px;">Бронь № 689 от 01.04.2020 на сумму 0 RUB</span></div>
<div class="c" style="left:1440px"><span class="s" style="letter-spacing:0.223px;">Бронь № ...</span></div>
<div class="c" style="left:1616px"><span class="s" style="letter-spacing:-0.023px;">Основ</span></div>
</div>
<div class="row" style="top:880px;background:#fff">
<svg class="abs" style="left:8px;top:9px" width="16" height="10" viewBox="0 0 16 10"><rect x="0.500" y="1.500" width="14" height="7" rx="1.200" fill="#c5def4" stroke="#7d94b1" stroke-width="1"/><path d="M2.400 6.700 C2.600 5.400 3.600 4.200 4.500 3.400 C5.300 4 5.600 6 6.600 6.700 C7.500 7.100 8 5.900 8.700 5.400 C9.500 4.800 10.300 4.500 11.800 4.500" fill="none" stroke="#0f4f92" stroke-width="1.150" stroke-linecap="round"/></svg>
<div class="c" style="left:32px"><span class="s" style="letter-spacing:-0.078px;">02.04.2020 15:51:23</span></div>
<div class="c" style="left:205px"><span class="s" style="letter-spacing:-0.091px;">Сделка 000000008767 от 16.09.2024 22:14...</span></div>
<div class="c" style="left:490px"><span class="s" style="letter-spacing:0.111px;">Клещёва Лариса Нико...</span></div>
<div class="c" style="left:657px"><span class="s" style="letter-spacing:0.056px;">Т...</span></div>
<div class="c" style="left:702px"><span class="s" style="letter-spacing:-0.042px;">Ожогино, ГП 8, кладовая №3.3</span></div>
<div class="c" style="left:1053px"><span class="s" style="letter-spacing:-0.010px;">Бронь № 698 от 02.04.2020 на сумму 190 000 RUB</span></div>
<div class="c" style="left:1440px"><span class="s" style="letter-spacing:0.223px;">Бронь № ...</span></div>
<div class="c" style="left:1616px"><span class="s" style="letter-spacing:-0.023px;">Основ</span></div>
</div>
<div class="row" style="top:909px;background:#fafafa">
<svg class="abs" style="left:8px;top:9px" width="16" height="10" viewBox="0 0 16 10"><rect x="0.500" y="1.500" width="14" height="7" rx="1.200" fill="#c5def4" stroke="#7d94b1" stroke-width="1"/><path d="M2.400 6.700 C2.600 5.400 3.600 4.200 4.500 3.400 C5.300 4 5.600 6 6.600 6.700 C7.500 7.100 8 5.900 8.700 5.400 C9.500 4.800 10.300 4.500 11.800 4.500" fill="none" stroke="#0f4f92" stroke-width="1.150" stroke-linecap="round"/></svg>
<div class="c" style="left:32px"><span class="s" style="letter-spacing:-0.069px;">03.04.2020 9:46:32</span></div>
<div class="c" style="left:205px"><span class="s" style="letter-spacing:-0.091px;">Сделка 000000008771 от 16.09.2024 22:14...</span></div>
<div class="c" style="left:490px"><span class="s" style="letter-spacing:0.062px;">Бойченко Антон Алекс...</span></div>
<div class="c" style="left:657px"><span class="s" style="letter-spacing:0.056px;">Т...</span></div>
<div class="c" style="left:702px"><span class="s" style="letter-spacing:-0.042px;">Ожогино, ГП 8, кладовая №2.2</span></div>
<div class="c" style="left:1053px"><span class="s" style="letter-spacing:-0.055px;">Договор (с покупателем) № Ф1-О-ГП-8-Кл-2.2 от 03.04.202...</span></div>
<div class="c" style="left:1440px"><span class="s" style="letter-spacing:0.223px;">Бронь № ...</span></div>
<div class="c" style="left:1529px"><span class="s" style="letter-spacing:0.138px;">Договор (...</span></div>
<div class="c" style="left:1616px"><span class="s" style="letter-spacing:-0.023px;">Основ</span></div>
</div>
<div class="row" style="top:938px;background:#fff">
<svg class="abs" style="left:8px;top:9px" width="16" height="10" viewBox="0 0 16 10"><rect x="0.500" y="1.500" width="14" height="7" rx="1.200" fill="#c5def4" stroke="#7d94b1" stroke-width="1"/><path d="M2.400 6.700 C2.600 5.400 3.600 4.200 4.500 3.400 C5.300 4 5.600 6 6.600 6.700 C7.500 7.100 8 5.900 8.700 5.400 C9.500 4.800 10.300 4.500 11.800 4.500" fill="none" stroke="#0f4f92" stroke-width="1.150" stroke-linecap="round"/></svg>
<div class="c" style="left:32px"><span class="s" style="letter-spacing:-0.069px;">09.04.2020 0:00:00</span></div>
<div class="c" style="left:205px"><span class="s" style="letter-spacing:-0.091px;">Сделка 000000008771 от 16.09.2024 22:14...</span></div>
<div class="c" style="left:490px"><span class="s" style="letter-spacing:0.062px;">Бойченко Антон Алекс...</span></div>
<div class="c" style="left:657px"><span class="s" style="letter-spacing:0.056px;">Т...</span></div>
<div class="c" style="left:702px"><span class="s" style="letter-spacing:0.058px;">Ожогино, ГП 8, Парадная 2, кв. №25</span></div>
<div class="c" style="left:1053px"><span class="s" style="letter-spacing:-0.040px;">Поступление денежных средств № 000007976&nbsp;&nbsp; от 09.04.20...</span></div>
<div class="c" style="left:1440px"><span class="s" style="letter-spacing:0.223px;">Бронь № ...</span></div>
<div class="c" style="left:1529px"><span class="s" style="letter-spacing:0.138px;">Договор (...</span></div>
<div class="c" style="left:1616px"><span class="s" style="letter-spacing:-0.023px;">Основ</span></div>
</div>
<div class="abs" style="left:247px;top:959px;width:1653px;height:20px;background:#fff"></div>
<div class="abs" style="left:270px;top:964px;width:757px;height:8px;border-radius:4px;background:#a6a6a6"></div>
<div class="abs" style="left:1027px;top:964px;width:735px;height:8px;border-radius:0 4px 4px 0;background:#d9d9d9"></div>
<svg class="abs" style="left:1760px;top:958px" width="141" height="21" viewBox="0 0 141 21" ><rect x="44" y="1" width="49" height="20" fill="#fff"/><rect x="93" y="1" width="47" height="20" fill="#f6f6f6"/><path d="M12 7.200 L16 10.100 L12 13 Z" fill="#555"/><g stroke="#a8a8a8" stroke-width="1" fill="none"><path d="M44.500 0 V21 M68.500 0 V21 M92.500 0 V21 M116.500 0 V21 M44 0.500 H141"/></g><path d="M52 13.900 H60.800 L56.400 9.200 Z M52 8.200 H60.800 V9.200 H52 Z" fill="#b4b4b4"/><path d="M75.800 13.900 H85 L80.400 9 Z" fill="#b4b4b4"/><path d="M100 9.200 H109.200 L104.600 14.300 Z" fill="#333"/><path d="M123.900 9.200 H133 L128.500 13.700 Z M123.900 13.900 H133 V14.900 H123.900 Z" fill="#333"/></svg>
<div class="abs" style="left:256px;top:965px;width:0;height:0;border-top:3px solid transparent;border-bottom:3px solid transparent;border-right:4px solid #c4c4c4"></div>
<div class="abs" style="left:764px;top:473px;width:391px;height:131px;background:#fff;border:1px solid #b0b0b0;box-shadow:0 1px 7px rgba(0,0,0,.25)"></div>
<svg class="abs" style="left:1065px;top:479px" width="90" height="22" viewBox="0 0 90 22" ><circle cx="12.500" cy="6.300" r="1.450" fill="#777"/><circle cx="12.500" cy="10.700" r="1.450" fill="#777"/><circle cx="12.500" cy="15.100" r="1.450" fill="#777"/><rect x="39" y="6.500" width="8.500" height="8.500" fill="none" stroke="#333" stroke-width="1.200"/><path d="M68.500 6 L78.500 16 M78.500 6 L68.500 16" stroke="#333" stroke-width="1.200"/></svg>
<svg class="abs" style="left:777px;top:507px" width="48" height="48" viewBox="0 0 48 48" ><path d="M18.3 1.2 A23.5 23.5 0 0 1 29.7 1.2 L28.1 7.7 A16.8 16.8 0 0 0 19.9 7.7 Z" fill="#f8b858" stroke="#f6ae48" stroke-width="0.8" stroke-linejoin="round"/><path d="M32.8 2.2 A23.5 23.5 0 0 1 42.0 8.9 L36.9 13.2 A16.8 16.8 0 0 0 30.3 8.4 Z" fill="#ffeeaa" stroke="#fccf72" stroke-width="0.8" stroke-linejoin="round"/><path d="M43.9 11.5 A23.5 23.5 0 0 1 47.4 22.4 L40.8 22.8 A16.8 16.8 0 0 0 38.2 15.1 Z" fill="#ffeeaa" stroke="#fccf72" stroke-width="0.8" stroke-linejoin="round"/><path d="M47.4 25.6 A23.5 23.5 0 0 1 43.9 36.5 L38.2 32.9 A16.8 16.8 0 0 0 40.8 25.2 Z" fill="#ffeeaa" stroke="#fccf72" stroke-width="0.8" stroke-linejoin="round"/><path d="M42.0 39.1 A23.5 23.5 0 0 1 32.8 45.8 L30.3 39.6 A16.8 16.8 0 0 0 36.9 34.8 Z" fill="#ffeeaa" stroke="#fccf72" stroke-width="0.8" stroke-linejoin="round"/><path d="M29.7 46.8 A23.5 23.5 0 0 1 18.3 46.8 L19.9 40.3 A16.8 16.8 0 0 0 28.1 40.3 Z" fill="#ffeeaa" stroke="#fccf72" stroke-width="0.8" stroke-linejoin="round"/><path d="M15.2 45.8 A23.5 23.5 0 0 1 6.0 39.1 L11.1 34.8 A16.8 16.8 0 0 0 17.7 39.6 Z" fill="#ffeeaa" stroke="#fccf72" stroke-width="0.8" stroke-linejoin="round"/><path d="M4.1 36.5 A23.5 23.5 0 0 1 0.6 25.6 L7.2 25.2 A16.8 16.8 0 0 0 9.8 32.9 Z" fill="#ffeeaa" stroke="#fccf72" stroke-width="0.8" stroke-linejoin="round"/><path d="M0.6 22.4 A23.5 23.5 0 0 1 4.1 11.5 L9.8 15.1 A16.8 16.8 0 0 0 7.2 22.8 Z" fill="#ffeeaa" stroke="#fccf72" stroke-width="0.8" stroke-linejoin="round"/><path d="M6.0 8.9 A23.5 23.5 0 0 1 15.2 2.2 L17.7 8.4 A16.8 16.8 0 0 0 11.1 13.2 Z" fill="#fbd37a" stroke="#fccf72" stroke-width="0.8" stroke-linejoin="round"/></svg>
<div class="t" style="left:835px;top:516px;color:#333;line-height:16px"><span class="s" style="letter-spacing:-0.022px;">Пожалуйста, подождите... 0,129% (загрузка</span><br><span class="s" style="letter-spacing:-0.082px;">характеристик в Сделки общая)</span></div>
<div class="btn" style="left:1062px;top:564px;width:73px;height:26px;padding-top:5px"><span class="s" style="letter-spacing:-0.145px;">Отмена</span></div>
<svg class="abs" style="left:1140px;top:530px" width="330" height="120" viewBox="0 0 330 120" ><path d="M314 111 L30 21.700" stroke="#e3392e" stroke-width="4" stroke-linecap="round"/><path d="M12 16 L41.900 10.900 L34.500 23.400 L33.700 37 Z" fill="#e3392e"/></svg>
<div class="abs" id="taskbar"></div>
<div class="abs" style="left:539px;top:992px;width:44px;height:40px;background:#3b3b3d"></div><div class="abs" style="left:583px;top:992px;width:4px;height:40px;background:#2c2c2d"></div><div class="abs" style="left:200px;top:1030px;width:40px;height:2px;background:#76b9ed"></div><div class="abs" style="left:396px;top:1030px;width:40px;height:2px;background:#76b9ed"></div><div class="abs" style="left:539px;top:1030px;width:48px;height:2px;background:#76b9ed"></div><svg class="abs" style="left:0px;top:1000px" width="600" height="26" viewBox="0 0 600 26" ><path d="M16 6.300 L22.700 5.400 V11.700 H16 Z M23.600 5.300 L32 4.100 V11.700 H23.600 Z M16 12.600 H22.700 V18.900 L16 18 Z M23.600 12.600 H32 V20.200 L23.600 19 Z" fill="#fff"/><circle cx="74.500" cy="9.800" r="5.400" fill="none" stroke="#fff" stroke-width="1.300"/><path d="M70.800 13.800 L64.800 19.800" stroke="#fff" stroke-width="1.500"/><g fill="none" stroke="#fff" stroke-width="1.200"><rect x="113.500" y="8.500" width="8" height="7"/><path d="M112.500 6.200 V4.500 H122.500 V6.200 M112.500 17.800 V19.500 H122.500 V17.800 M126.500 4 V7.500 M126.500 12.500 V19.500"/></g><rect x="125" y="8.500" width="3" height="3" fill="#fff"/><path d="M165 23.400 C160.500 22.500 160.500 16 165.500 10 C170 4.800 177 1.200 180.500 2.200" fill="none" stroke="#d9a514" stroke-width="1.600"/><text transform="translate(161.600,21.600) scale(1.060,1)" font-family="Liberation Sans,sans-serif" font-size="35.500" font-weight="bold" fill="#35b8f2">e</text><path d="M161.800 21.800 C160 17 164 9 171 4.500 C176 1.200 181.500 1 181.800 4 C182 5.500 181.300 7 180.500 8.200" fill="none" stroke="#f2c522" stroke-width="2"/><path d="M209.500 4 a1 1 0 0 1 1 -1 H217.500 L219.300 5 H230.500 V19.800 H209.500 Z" fill="#f3c64c"/><rect x="209.500" y="5.800" width="21" height="14.200" fill="#ffe7a0"/><rect x="211" y="3.700" width="5" height="1" fill="#fff3c4"/><path d="M213.300 21 V13.400 H226.800 V21 H223.300 V17 H216.800 V21 Z" fill="#3aa4ea"/><g transform="translate(-1.500,0)"><path d="M259.500 0.500 L279.800 3 L278 17 L261.500 18.500 Z" fill="#c5cad3"/><path d="M261 2.300 L278.300 4.300 L276.800 15.700 L262.700 17 Z" fill="#1424c4"/><path d="M270.500 3.400 L278.300 4.300 L276.800 15.700 L271.500 16.200 C273.500 12 273 7 270.500 3.400 Z" fill="#6f80ec"/><path d="M261 2.300 L266 2.900 L264.500 16.800 L262.700 17 Z" fill="#3a4ee0"/><path d="M264.500 18.600 H272 L275 23 H262.500 Z" fill="#b4bac4"/><ellipse cx="268.500" cy="23" rx="6.500" ry="1.600" fill="#d5d8de"/><circle cx="275.400" cy="18.400" r="5.200" fill="#e8e8e8" stroke="#c8c8c8" stroke-width="0.600"/><path d="M272.600 20.400 L274.800 18.400 L272.900 16.400 M278.200 16.400 L276 18.400 L277.900 20.400" fill="none" stroke="#2c9a3a" stroke-width="1.300"/></g><path d="M306 15 C306 8 314 4 321 5.500 C328 7 329 14 325 18.500 C322 22 318 22.500 317 20 C316 17.500 313.500 18 311.500 19.500 C308.500 21.500 306 19 306 15 Z" fill="#cfe0ee"/><circle cx="313" cy="10.500" r="1.700" fill="#e24a3b"/><circle cx="318.500" cy="8.500" r="1.700" fill="#f0a52a"/><circle cx="311.500" cy="15.500" r="1.700" fill="#3d9a45"/><circle cx="316.500" cy="16.500" r="1.600" fill="#3a6fd0"/><path d="M327.500 2 L330 3.500 L320 22.500 L317.500 23.500 L318 20.500 Z" fill="#d98a3a"/><path d="M326 1 L330.500 0.500 L329.500 5 Z" fill="#f1d7a8"/><defs><linearGradient id="eg1" x1="0" y1="0.300" x2="1" y2="0.450"><stop offset="0" stop-color="#2196e6"/><stop offset="0.500" stop-color="#37bdc8"/><stop offset="1" stop-color="#62df58"/></linearGradient></defs><circle cx="367" cy="11.800" r="12" fill="url(#eg1)"/><path d="M355.200 10.500 C358 7 363 7 366 9 C362 10 361 14 364 17 C367 20 373 20.500 378.200 18.200 C376.500 21.800 371.500 23.800 367 23.800 C360.400 23.800 355 18.400 355 11.800 Z" fill="#1c7fd8"/><path d="M359.500 11.200 C358 16 362 22 369 22.600 C373 22.900 376.500 21 378.200 18.300 C373 20.500 367 20 364 17 C361.500 14.500 361.500 11.500 363.500 9.800 C362 9.500 360.300 9.900 359.500 11.200 Z" fill="#0f57a8"/><path d="M364 11.200 C365.500 9.600 368.500 9.600 369.800 11.500 C371 13.500 372.500 15.500 378.300 16.300 L378.600 18 C374 20 368.500 19.600 365.500 16.800 C363.600 15 363.200 12.600 364 11.200 Z" fill="#030308"/><defs><linearGradient id="ng1" x1="0" y1="0" x2="0" y2="1"><stop offset="0" stop-color="#e2f28e"/><stop offset="0.450" stop-color="#9ad93f"/><stop offset="1" stop-color="#1c9410"/></linearGradient></defs><path d="M405 0.200 H418.500 L423.200 4.800 V23.800 H405 Z" fill="#f2f3ee"/><path d="M418.500 0.200 V4.800 H423.200 Z" fill="#c9cbc6"/><path d="M406.500 1.400 H417.500" stroke="#b9bbb6" stroke-width="1" stroke-dasharray="1 1"/><rect x="405.700" y="9" width="16.800" height="14" fill="url(#ng1)"/><rect x="409.400" y="6.300" width="2.200" height="8" fill="none" stroke="#1e2a1e" stroke-width="0.900"/><path d="M413 10.500 H414.800 M415.800 10.500 H417.600" stroke="#1e2a1e" stroke-width="1.200"/><path d="M425 1.600 L427 2.800 L418.600 17.600 L417.200 18.600 L417 16.600 Z" fill="#f0a322"/><path d="M425 1.600 L427 2.800 L426.200 4.200 L424.200 3 Z" fill="#e0565a"/><path d="M417 16.600 L418.600 17.600 L417.200 18.600 Z" fill="#c9c0b0"/><ellipse cx="465" cy="10.500" rx="11.500" ry="7" transform="rotate(-22 465 10.500)" fill="#ececec" stroke="#d83a3a" stroke-width="1.200"/><path d="M455 14 C456 18 462 18.500 466 16.500 L476 11 L475 15 C471 19 460 21 456 18 Z" fill="#8a8a8a"/><path d="M462 4 L470 16 M472 5.500 L466 15" stroke="#6c7a86" stroke-width="1.200"/><ellipse cx="468.500" cy="19.500" rx="1.800" ry="2.800" transform="rotate(25 468.500 19.500)" fill="none" stroke="#2a8ad6" stroke-width="1.400"/><ellipse cx="474" cy="17.500" rx="1.800" ry="2.800" transform="rotate(-50 474 17.500)" fill="none" stroke="#2a8ad6" stroke-width="1.400"/><circle cx="513.8" cy="11.700" r="12" fill="#fbd928"/><circle cx="511.79999999999995" cy="8" r="7" fill="#fde453" opacity="0.700"/><g fill="none" stroke="#e0261f" stroke-width="1.300" transform="translate(505.29999999999995,6.500)"><path d="M0.500 3 L3 1 V9.500"/><path d="M16.500 7 H9.500 A2.600 2.600 0 1 1 12 3.400"/><path d="M16.500 9.300 H9.500 A4.800 4.800 0 1 1 14.200 3.600"/></g><circle cx="562.8" cy="11.700" r="12" fill="#fbd928"/><circle cx="560.8" cy="8" r="7" fill="#fde453" opacity="0.700"/><g fill="none" stroke="#e0261f" stroke-width="1.300" transform="translate(554.3,6.500)"><path d="M0.500 3 L3 1 V9.500"/><path d="M16.500 7 H9.500 A2.600 2.600 0 1 1 12 3.400"/><path d="M16.500 9.300 H9.500 A4.800 4.800 0 1 1 14.200 3.600"/></g></svg><svg class="abs" style="left:1740px;top:992px" width="180" height="40" viewBox="0 0 180 40" ><path d="M7.500 23 L13 17.200 L18.500 23" fill="none" stroke="#fff" stroke-width="1.200"/><path d="M139 12 H155 V24.800 H148.500 L152.500 29 L146 24.800 H139 Z" fill="#fff"/><path d="M142 15.500 H152 M142 18.300 H152 M142 21.100 H152" stroke="#0c0c0c" stroke-width="1.100"/><circle cx="154.200" cy="27.900" r="7.600" fill="#2b2b2b" stroke="#6e6e6e" stroke-width="1"/><text x="151.400" y="32" font-family="Liberation Sans,sans-serif" font-size="11" fill="#fff">1</text><path d="M175.500 0 V40" stroke="#6a6a6a" stroke-width="1"/></svg>
<div class="t" style="left:1772px;top:1004px;color:#fff;font-size:11.500px;letter-spacing:-0.300px">РУС</div>
<div class="t" style="left:1819.500px;top:995px;color:#fff;font-size:11px">21:00</div>
<div class="t" style="left:1806.500px;top:1013px;color:#fff;font-size:11px">04.04.2026</div>
</body></html>
